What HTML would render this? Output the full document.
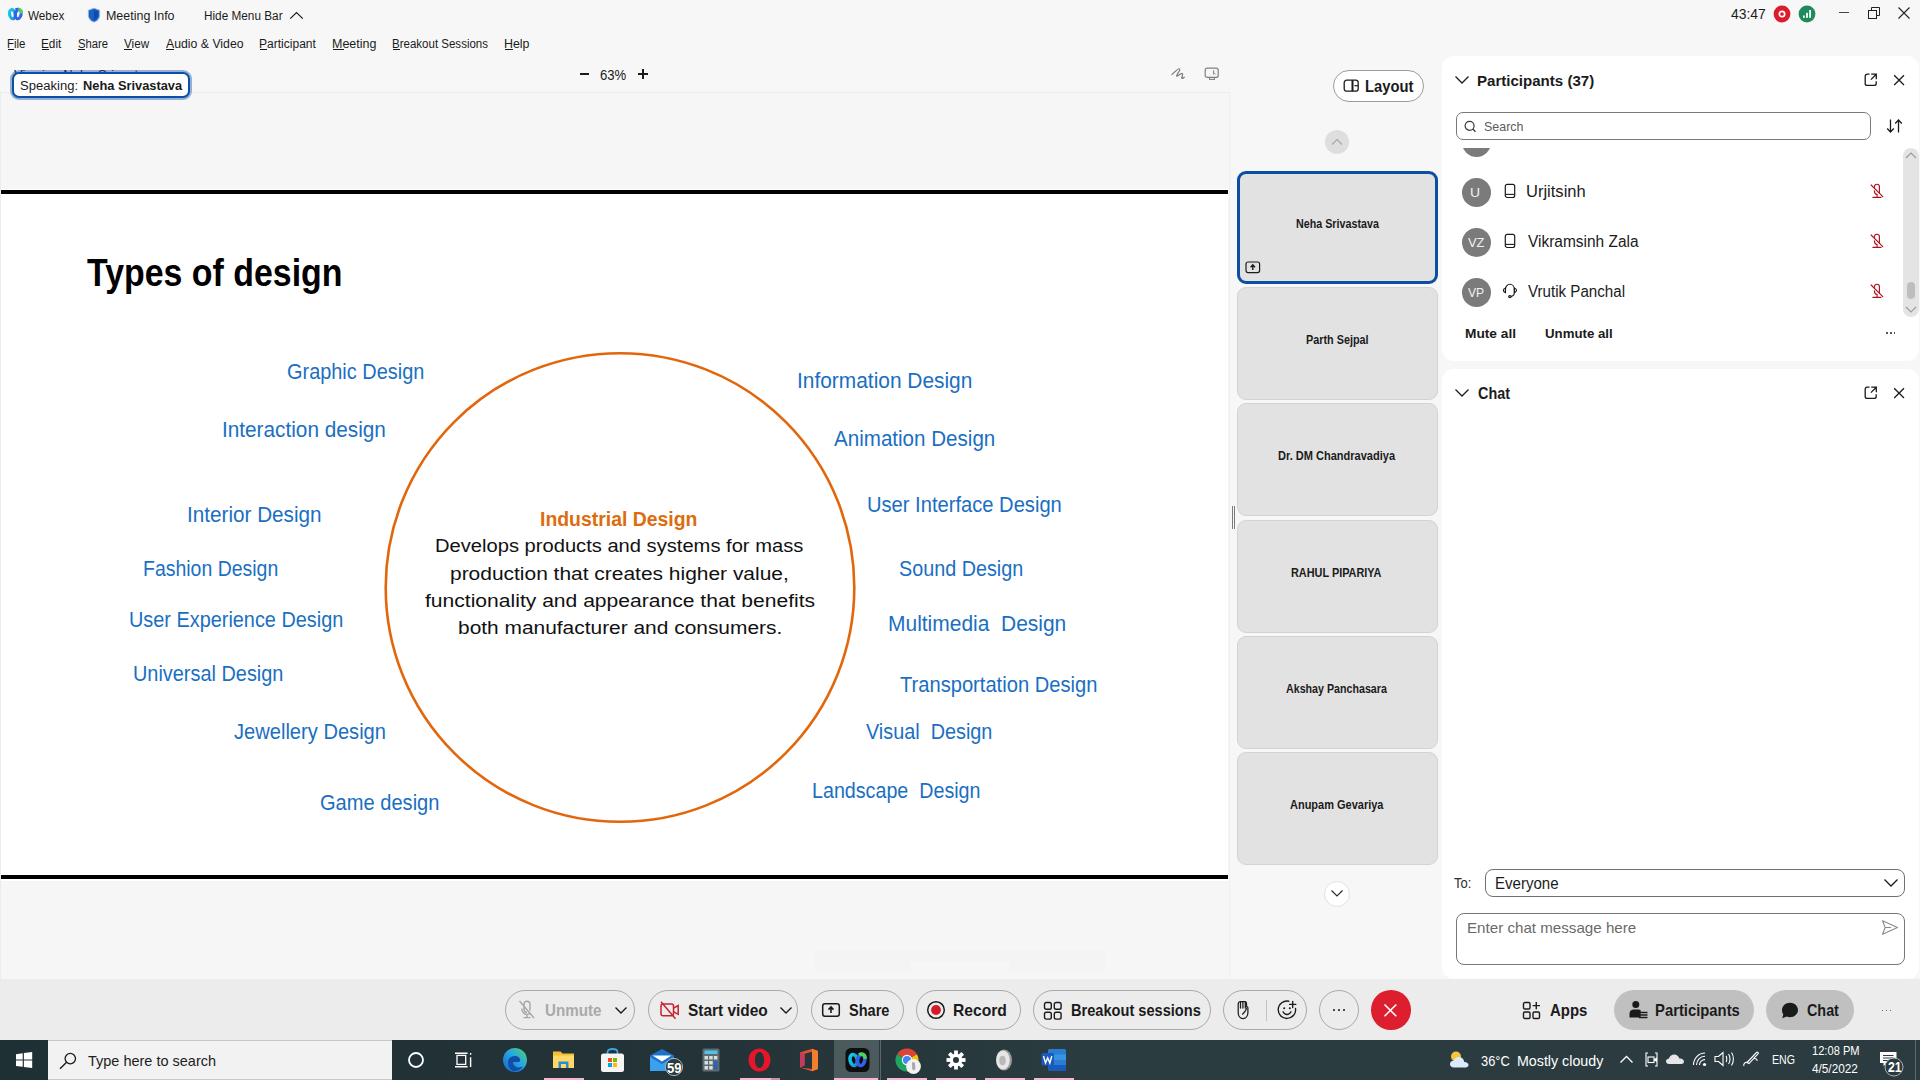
<!DOCTYPE html><html><head><meta charset="utf-8"><title>Webex</title>
<style>
html,body{margin:0;padding:0}
body{width:1920px;height:1080px;position:relative;overflow:hidden;background:#f7f7f7;font-family:"Liberation Sans",sans-serif}
.t{position:absolute;white-space:nowrap;transform-origin:0 0;display:block}
svg{overflow:visible}
</style></head><body>
<div style="position:absolute;left:0px;top:0px;width:1920px;height:979px;background:#f7f7f7"></div>
<div style="position:absolute;left:0px;top:92px;width:1228px;height:887px;background:#f6f6f6;border-top:1px solid #ececec;border-left:1px solid #ececec;border-right:1px solid #efefef"></div>
<div style="position:absolute;left:1px;top:189px;width:1227px;height:692px;background:#fff"></div>
<div style="position:absolute;left:1px;top:190px;width:1227px;height:4px;background:#000"></div>
<div style="position:absolute;left:1px;top:875px;width:1227px;height:4px;background:#000"></div>
<svg style="position:absolute;left:6px;top:7px;" width="19" height="15" viewBox="0 0 19 15"><defs><linearGradient id="wl" x1="0" y1="0" x2="1" y2="1"><stop offset="0" stop-color="#0fd0f5"></stop><stop offset=".6" stop-color="#1aa8d8"></stop><stop offset="1" stop-color="#2f66f2"></stop></linearGradient></defs><ellipse cx="6.4" cy="7.2" rx="2.9" ry="4.6" fill="none" stroke="url(#wl)" stroke-width="3.1" transform="rotate(-14 6.4 7.2)"></ellipse><ellipse cx="12.2" cy="7.2" rx="2.9" ry="4.6" fill="none" stroke="#2f63ee" stroke-width="3.1" transform="rotate(14 12.2 7.2)"></ellipse><path d="M10.6 3.2C11.8 2.3 13.6 2.3 14.8 3.6C15.4 4.3 15.6 5.4 15.5 6.6" fill="none" stroke="#4fd35a" stroke-width="3.1"></path><path d="M9.6 2.9C10.5 2.4 11.4 2.3 12.3 2.4" fill="none" stroke="#2f63ee" stroke-width="3.1"></path></svg>
<span class="t" id="t0" style="left: 28.3px; top: 8.51px; font-size: 13.66px; line-height: 13.66px; font-weight: 400; color: rgb(27, 27, 27); transform: scaleX(0.8579);">Webex</span>
<svg style="position:absolute;left:87px;top:7px;" width="14" height="16" viewBox="0 0 14 16"><path d="M7 1.2L12.6 3.3V8.2C12.6 11.6 10.2 14 7 15.1C3.8 14 1.4 11.6 1.4 8.2V3.3Z" fill="#1c5fc2" stroke="#8fb4ea" stroke-width="1"></path><path d="M7 3.2L10.8 4.6V8.2C10.8 10.6 9.2 12.4 7 13.2Z" fill="#0f4aa8"></path></svg>
<span class="t" id="t1" style="left: 105.79px; top: 8.51px; font-size: 13.66px; line-height: 13.66px; font-weight: 400; color: rgb(27, 27, 27); transform: scaleX(0.912);">Meeting Info</span>
<span class="t" id="t2" style="left: 203.84px; top: 8.51px; font-size: 13.66px; line-height: 13.66px; font-weight: 400; color: rgb(27, 27, 27); transform: scaleX(0.8626);">Hide Menu Bar</span>
<svg style="position:absolute;left:289px;top:11px;" width="15" height="9" viewBox="0 0 15 9"><path d="M1.2 7.6L7.5 1.5L13.8 7.6" fill="none" stroke="#1b1b1b" stroke-width="1.2"></path></svg>
<span class="t" id="t3" style="left: 1731px; top: 5.8px; font-size: 15.12px; line-height: 15.12px; font-weight: 400; color: rgb(27, 27, 27); transform: scaleX(0.9223);">43:47</span>
<svg style="position:absolute;left:1773px;top:5px;" width="18" height="18" viewBox="0 0 18 18"><circle cx="9" cy="9" r="8.4" fill="#dc1c2c"></circle><circle cx="9" cy="9" r="2.7" fill="none" stroke="#fff" stroke-width="1.7"></circle></svg>
<svg style="position:absolute;left:1798px;top:5px;" width="18" height="18" viewBox="0 0 18 18"><circle cx="9" cy="9" r="8.4" fill="#1f8a5b"></circle><rect x="5" y="10.5" width="1.8" height="2.3" fill="#fff"></rect><rect x="8.1" y="7.8" width="1.8" height="5" fill="#fff"></rect><rect x="11.2" y="5" width="1.8" height="7.8" fill="#fff"></rect></svg>
<div style="position:absolute;left:1839px;top:12px;width:10px;height:1px;background:#444"></div>
<svg style="position:absolute;left:1867px;top:6px;" width="14" height="14" viewBox="0 0 14 14"><rect x="1.5" y="4.5" width="8" height="8" fill="none" stroke="#222" stroke-width="1"></rect><path d="M4.5 4.5V1.5H12.5V9.5H9.5" fill="none" stroke="#222" stroke-width="1"></path></svg>
<svg style="position:absolute;left:1897px;top:6px;" width="14" height="14" viewBox="0 0 14 14"><path d="M1.5 1.5L12.5 12.5M12.5 1.5L1.5 12.5" stroke="#222" stroke-width="1.1"></path></svg>
<span class="t" id="t4" style="left: 7.4px; top: 38.01px; font-size: 12.65px; line-height: 12.65px; font-weight: 400; color: rgb(27, 27, 27); transform: scaleX(0.9049);">File</span>
<div style="position:absolute;left:8.3px;top:49px;width:6px;height:1px;background:#1b1b1b"></div>
<span class="t" id="t5" style="left: 41.27px; top: 38.01px; font-size: 12.65px; line-height: 12.65px; font-weight: 400; color: rgb(27, 27, 27); transform: scaleX(0.9309);">Edit</span>
<div style="position:absolute;left:42.2px;top:49px;width:7px;height:1px;background:#1b1b1b"></div>
<span class="t" id="t6" style="left: 78px; top: 38.01px; font-size: 12.65px; line-height: 12.65px; font-weight: 400; color: rgb(27, 27, 27); transform: scaleX(0.8902);">Share</span>
<div style="position:absolute;left:78px;top:49px;width:7px;height:1px;background:#1b1b1b"></div>
<span class="t" id="t7" style="left: 123.8px; top: 38.01px; font-size: 12.65px; line-height: 12.65px; font-weight: 400; color: rgb(27, 27, 27); transform: scaleX(0.9236);">View</span>
<div style="position:absolute;left:123.8px;top:49px;width:8px;height:1px;background:#1b1b1b"></div>
<span class="t" id="t8" style="left: 166.2px; top: 38.01px; font-size: 12.65px; line-height: 12.65px; font-weight: 400; color: rgb(27, 27, 27); transform: scaleX(0.9705);">Audio &amp; Video</span>
<div style="position:absolute;left:166.2px;top:49px;width:8px;height:1px;background:#1b1b1b"></div>
<span class="t" id="t9" style="left: 259.35px; top: 38.01px; font-size: 12.65px; line-height: 12.65px; font-weight: 400; color: rgb(27, 27, 27); transform: scaleX(0.9525);">Participant</span>
<div style="position:absolute;left:260.3px;top:49px;width:7px;height:1px;background:#1b1b1b"></div>
<span class="t" id="t10" style="left: 332.21px; top: 38.01px; font-size: 12.65px; line-height: 12.65px; font-weight: 400; color: rgb(27, 27, 27); transform: scaleX(0.9877);">Meeting</span>
<div style="position:absolute;left:333.2px;top:49px;width:11px;height:1px;background:#1b1b1b"></div>
<span class="t" id="t11" style="left: 392.29px; top: 38.01px; font-size: 12.65px; line-height: 12.65px; font-weight: 400; color: rgb(27, 27, 27); transform: scaleX(0.9109);">Breakout Sessions</span>
<div style="position:absolute;left:393.2px;top:49px;width:7px;height:1px;background:#1b1b1b"></div>
<span class="t" id="t12" style="left: 503.52px; top: 38.01px; font-size: 12.65px; line-height: 12.65px; font-weight: 400; color: rgb(27, 27, 27); transform: scaleX(0.9813);">Help</span>
<div style="position:absolute;left:504.5px;top:49px;width:8px;height:1px;background:#1b1b1b"></div>
<span class="t" id="t13" style="left: 13.5px; top: 67.61px; font-size: 13.66px; line-height: 13.66px; font-weight: 400; color: rgb(27, 27, 27); transform: scaleX(0.9574);">Viewing Neha Srivastava</span>
<div style="position:absolute;left:12px;top:72px;width:174px;height:21.5px;border:2px solid #0b4fa8;border-radius:7px;background:#fff;box-shadow:0 0 0 2px rgba(11,79,168,.42)"></div>
<span class="t" id="t14" style="left: 20.3px; top: 78.7px; font-size: 13.66px; line-height: 13.66px; font-weight: 400; color: rgb(27, 27, 27); transform: scaleX(0.9559);">Speaking:</span>
<span class="t" id="t15" style="left: 83.3px; top: 78.7px; font-size: 13.66px; line-height: 13.66px; font-weight: 700; color: rgb(27, 27, 27); transform: scaleX(0.9393);">Neha Srivastava</span>
<div style="position:absolute;left:579.5px;top:73px;width:9px;height:1.6px;background:#1b1b1b"></div>
<span class="t" id="t16" style="left: 600.2px; top: 66.91px; font-size: 15.26px; line-height: 15.26px; font-weight: 400; color: rgb(27, 27, 27); transform: scaleX(0.8591);">63%</span>
<div style="position:absolute;left:638.4px;top:73.2px;width:9.5px;height:1.6px;background:#1b1b1b"></div>
<div style="position:absolute;left:642.4px;top:69px;width:1.6px;height:10.2px;background:#1b1b1b"></div>
<svg style="position:absolute;left:1170px;top:66px;" width="17" height="15" viewBox="0 0 17 15"><path d="M1.9 8.6C4.5 6 8.5 2 9.7 2.9C10.8 3.7 6 9.5 6.6 10.1C7.2 10.7 11.5 6.6 12.5 7.6C13.3 8.4 11.2 12.2 11.9 12.4C12.4 12.6 13.6 11.7 14.3 11.3" fill="none" stroke="#808080" stroke-width="1.3" stroke-linecap="round" stroke-linejoin="round"></path></svg>
<svg style="position:absolute;left:1204px;top:67px;" width="16" height="14" viewBox="0 0 16 14"><rect x="1.2" y="1.2" width="13" height="9.2" rx="2" fill="none" stroke="#808080" stroke-width="1.2"></rect><rect x="5.5" y="10.6" width="5" height="1.8" fill="none" stroke="#808080" stroke-width="1"></rect><path d="M9.6 3.2V7.2L10.6 6.4L11.6 7.4" fill="none" stroke="#808080" stroke-width="1"></path></svg>
<span class="t" id="t17" style="left: 86.5px; top: 254.31px; font-size: 38.95px; line-height: 38.95px; font-weight: 700; color: rgb(0, 0, 0); transform: scaleX(0.8703);">Types of design</span>
<span class="t" id="t18" style="left: 286.56px; top: 360.51px; font-size: 21.22px; line-height: 21.22px; font-weight: 400; color: rgb(26, 111, 194); transform: scaleX(0.9388);">Graphic Design</span>
<span class="t" id="t19" style="left: 221.72px; top: 418.91px; font-size: 21.22px; line-height: 21.22px; font-weight: 400; color: rgb(26, 111, 194); transform: scaleX(0.9783);">Interaction design</span>
<span class="t" id="t20" style="left: 187.02px; top: 504.11px; font-size: 21.22px; line-height: 21.22px; font-weight: 400; color: rgb(26, 111, 194); transform: scaleX(0.9752);">Interior Design</span>
<span class="t" id="t21" style="left: 143.38px; top: 557.71px; font-size: 21.22px; line-height: 21.22px; font-weight: 400; color: rgb(26, 111, 194); transform: scaleX(0.9174);">Fashion Design</span>
<span class="t" id="t22" style="left: 129.46px; top: 609.01px; font-size: 21.22px; line-height: 21.22px; font-weight: 400; color: rgb(26, 111, 194); transform: scaleX(0.9366);">User Experience Design</span>
<span class="t" id="t23" style="left: 133.26px; top: 662.61px; font-size: 21.22px; line-height: 21.22px; font-weight: 400; color: rgb(26, 111, 194); transform: scaleX(0.9377);">Universal Design</span>
<span class="t" id="t24" style="left: 234.4px; top: 720.76px; font-size: 21.22px; line-height: 21.22px; font-weight: 400; color: rgb(26, 111, 194); transform: scaleX(0.9475);">Jewellery Design</span>
<span class="t" id="t25" style="left: 320.3px; top: 791.76px; font-size: 21.22px; line-height: 21.22px; font-weight: 400; color: rgb(26, 111, 194); transform: scaleX(0.9465);">Game design</span>
<span class="t" id="t26" style="left: 797.22px; top: 370.01px; font-size: 21.22px; line-height: 21.22px; font-weight: 400; color: rgb(26, 111, 194); transform: scaleX(0.9847);">Information Design</span>
<span class="t" id="t27" style="left: 834.4px; top: 427.8px; font-size: 21.22px; line-height: 21.22px; font-weight: 400; color: rgb(26, 111, 194); transform: scaleX(0.9698);">Animation Design</span>
<span class="t" id="t28" style="left: 867.45px; top: 493.61px; font-size: 21.22px; line-height: 21.22px; font-weight: 400; color: rgb(26, 111, 194); transform: scaleX(0.9493);">User Interface Design</span>
<span class="t" id="t29" style="left: 899.2px; top: 557.76px; font-size: 21.22px; line-height: 21.22px; font-weight: 400; color: rgb(26, 111, 194); transform: scaleX(0.9313);">Sound Design</span>
<span class="t" id="t30" style="left: 888.01px; top: 612.61px; font-size: 21.22px; line-height: 21.22px; font-weight: 400; color: rgb(26, 111, 194); transform: scaleX(0.9881);">Multimedia&nbsp; Design</span>
<span class="t" id="t31" style="left: 899.9px; top: 674.01px; font-size: 21.22px; line-height: 21.22px; font-weight: 400; color: rgb(26, 111, 194); transform: scaleX(0.949);">Transportation Design</span>
<span class="t" id="t32" style="left: 866.2px; top: 721.41px; font-size: 21.22px; line-height: 21.22px; font-weight: 400; color: rgb(26, 111, 194); transform: scaleX(0.9342);">Visual&nbsp; Design</span>
<span class="t" id="t33" style="left: 812.27px; top: 779.91px; font-size: 21.22px; line-height: 21.22px; font-weight: 400; color: rgb(26, 111, 194); transform: scaleX(0.9274);">Landscape&nbsp; Design</span>
<svg style="position:absolute;left:380px;top:348px;" width="480" height="480" viewBox="0 0 480 480"><circle cx="240" cy="239.5" r="234.3" fill="none" stroke="#e2660c" stroke-width="2.6"></circle></svg>
<span class="t" id="t34" style="left: 540.02px; top: 509.6px; font-size: 19.77px; line-height: 19.77px; font-weight: 700; color: rgb(220, 108, 12); transform: scaleX(0.9819);">Industrial Design</span>
<span class="t" id="t35" style="left: 435.33px; top: 537.31px; font-size: 18.75px; line-height: 18.75px; font-weight: 400; color: rgb(17, 17, 17); transform: scaleX(1.0742);">Develops products and systems for mass</span>
<span class="t" id="t36" style="left: 450.18px; top: 564.6px; font-size: 18.75px; line-height: 18.75px; font-weight: 400; color: rgb(17, 17, 17); transform: scaleX(1.1169);">production that creates higher value,</span>
<span class="t" id="t37" style="left: 424.6px; top: 591.81px; font-size: 18.75px; line-height: 18.75px; font-weight: 400; color: rgb(17, 17, 17); transform: scaleX(1.1239);">functionality and appearance that benefits</span>
<span class="t" id="t38" style="left: 457.68px; top: 619.1px; font-size: 18.75px; line-height: 18.75px; font-weight: 400; color: rgb(17, 17, 17); transform: scaleX(1.1151);">both manufacturer and consumers.</span>
<div style="position:absolute;left:814px;top:950px;width:292px;height:22px;background:#f4f4f4"></div>
<div style="position:absolute;left:910px;top:962px;width:100px;height:10px;background:#f6f6f6;border-radius:2px"></div>
<div style="position:absolute;left:1333px;top:70px;width:89px;height:30px;border:1px solid #9c9c9c;border-radius:16px;background:#fff"></div>
<svg style="position:absolute;left:1343px;top:79px;" width="17" height="14" viewBox="0 0 17 14"><rect x="1.2" y="1.2" width="14" height="11" rx="2.5" fill="none" stroke="#1b1b1b" stroke-width="1.3"></rect><path d="M9.5 1.2V12.2" stroke="#1b1b1b" stroke-width="2"></path><path d="M11.5 6.7H15" stroke="#1b1b1b" stroke-width="1.2"></path></svg>
<span class="t" id="t39" style="left: 1364.77px; top: 79.01px; font-size: 15.99px; line-height: 15.99px; font-weight: 700; color: rgb(27, 27, 27); transform: scaleX(0.9257);">Layout</span>
<div style="position:absolute;left:1325px;top:130px;width:24px;height:24px;border-radius:50%;background:#dedede"></div>
<svg style="position:absolute;left:1331px;top:138px;" width="12" height="8" viewBox="0 0 12 8"><path d="M1 6.5L6 1.5L11 6.5" fill="none" stroke="#a6a6a6" stroke-width="1.1"></path></svg>
<div style="position:absolute;left:1237px;top:171px;width:195px;height:107px;border:3px solid #0b4ea3;border-radius:9px;background:#e2e2e2"></div>
<span class="t" id="t40" style="left: 1295.5px; top: 217.2px; font-size: 13.23px; line-height: 13.23px; font-weight: 700; color: rgb(27, 27, 27); transform: scaleX(0.8114);">Neha Srivastava</span>
<div style="position:absolute;left:1237px;top:287px;width:199px;height:111px;border:1px solid #d3d3d3;border-radius:9px;background:#e2e2e2"></div>
<span class="t" id="t41" style="left: 1305.6px; top: 333.33px; font-size: 13.23px; line-height: 13.23px; font-weight: 700; color: rgb(27, 27, 27); transform: scaleX(0.8187);">Parth Sejpal</span>
<div style="position:absolute;left:1237px;top:403px;width:199px;height:111px;border:1px solid #d3d3d3;border-radius:9px;background:#e2e2e2"></div>
<span class="t" id="t42" style="left: 1277.8px; top: 449.45px; font-size: 13.23px; line-height: 13.23px; font-weight: 700; color: rgb(27, 27, 27); transform: scaleX(0.8343);">Dr. DM Chandravadiya</span>
<div style="position:absolute;left:1237px;top:520px;width:199px;height:111px;border:1px solid #d3d3d3;border-radius:9px;background:#e2e2e2"></div>
<span class="t" id="t43" style="left: 1291px; top: 565.56px; font-size: 13.23px; line-height: 13.23px; font-weight: 700; color: rgb(27, 27, 27); transform: scaleX(0.8226);">RAHUL PIPARIYA</span>
<div style="position:absolute;left:1237px;top:636px;width:199px;height:111px;border:1px solid #d3d3d3;border-radius:9px;background:#e2e2e2"></div>
<span class="t" id="t44" style="left: 1285.8px; top: 681.69px; font-size: 13.23px; line-height: 13.23px; font-weight: 700; color: rgb(27, 27, 27); transform: scaleX(0.8075);">Akshay Panchasara</span>
<div style="position:absolute;left:1237px;top:752px;width:199px;height:111px;border:1px solid #d3d3d3;border-radius:9px;background:#e2e2e2"></div>
<span class="t" id="t45" style="left: 1290px; top: 797.81px; font-size: 13.23px; line-height: 13.23px; font-weight: 700; color: rgb(27, 27, 27); transform: scaleX(0.8315);">Anupam Gevariya</span>
<svg style="position:absolute;left:1245px;top:261px;" width="16" height="13" viewBox="0 0 16 13"><rect x="1" y="1" width="13.6" height="10.6" rx="2" fill="none" stroke="#1b1b1b" stroke-width="1.2"></rect><path d="M7.8 9V4.2M5.6 6.2L7.8 3.8L10 6.2" fill="none" stroke="#1b1b1b" stroke-width="1.4"></path></svg>
<div style="position:absolute;left:1324px;top:881px;width:24px;height:24px;border-radius:50%;background:#fff;border:1px solid #e2e2e2"></div>
<svg style="position:absolute;left:1330px;top:889px;" width="14" height="9" viewBox="0 0 14 9"><path d="M1.5 1.5L7 7L12.5 1.5" fill="none" stroke="#2a2a2a" stroke-width="1.2"></path></svg>
<div style="position:absolute;left:1231.5px;top:505.5px;width:1px;height:23.5px;background:#7a7a7a"></div>
<div style="position:absolute;left:1234px;top:505.5px;width:1px;height:23.5px;background:#7a7a7a"></div>
<div style="position:absolute;left:1442px;top:56px;width:477px;height:305px;border-radius:12px;background:#fff"></div>
<svg style="position:absolute;left:1454px;top:75px;" width="16" height="11" viewBox="0 0 16 11"><path d="M1.5 1.5L8 8L14.5 1.5" fill="none" stroke="#1b1b1b" stroke-width="1.3"></path></svg>
<span class="t" id="t46" style="left: 1477.41px; top: 72.8px; font-size: 15.26px; line-height: 15.26px; font-weight: 700; color: rgb(27, 27, 27); transform: scaleX(0.9875);">Participants (37)</span>
<svg style="position:absolute;left:1864px;top:73px;" width="14" height="14" viewBox="0 0 14 14"><path d="M5.5 1.2H3.2C2 1.2 1.2 2 1.2 3.2V10.4C1.2 11.6 2 12.4 3.2 12.4H10.2C11.4 12.4 12.2 11.6 12.2 10.4V8.3" fill="none" stroke="#1b1b1b" stroke-width="1.3"></path><path d="M7.2 1.2H12.3V6.2M12.3 1.2L6.9 6.6" fill="none" stroke="#1b1b1b" stroke-width="1.3"></path></svg>
<svg style="position:absolute;left:1893px;top:74px;" width="12.5" height="12.5" viewBox="0 0 12.5 12.5"><path d="M1.2 1.2L11 11M11 1.2L1.2 11" stroke="#1b1b1b" stroke-width="1.3"></path></svg>
<div style="position:absolute;left:1456px;top:112px;width:413px;height:26px;border:1px solid #7a7a7a;border-radius:7px;background:#fff"></div>
<svg style="position:absolute;left:1464px;top:120px;" width="13" height="13" viewBox="0 0 13 13"><circle cx="5.6" cy="5.8" r="4.5" fill="none" stroke="#3a3a3a" stroke-width="1.2"></circle><path d="M8.8 9L11.5 11.7" stroke="#3a3a3a" stroke-width="1.3"></path></svg>
<span class="t" id="t47" style="left: 1484px; top: 120.01px; font-size: 13.37px; line-height: 13.37px; font-weight: 400; color: rgb(92, 92, 92); transform: scaleX(0.9308);">Search</span>
<svg style="position:absolute;left:1886px;top:118px;" width="18" height="16" viewBox="0 0 18 16"><path d="M4.5 1.5V14M1.2 10.5L4.5 14L7.8 10.5" fill="none" stroke="#1b1b1b" stroke-width="1.3"></path><path d="M12.5 14.5V2M9.2 5.5L12.5 2L15.8 5.5" fill="none" stroke="#1b1b1b" stroke-width="1.3"></path></svg>
<div style="position:absolute;left:1442px;top:148px;width:460px;height:170px;overflow:hidden"><div style="position:absolute;left:19.5px;top:-20.5px;width:29px;height:29px;border-radius:50%;background:#7b7b7b"></div></div>
<div style="position:absolute;left:1461.5px;top:177.5px;width:29px;height:29px;border-radius:50%;background:#7b7b7b"></div>
<span class="t" id="t48" style="left: 1470.44px; top: 185.61px; font-size: 13.08px; line-height: 13.08px; font-weight: 400; color: rgb(242, 242, 242); transform: scaleX(1.0625);">U</span>
<svg style="position:absolute;left:1503px;top:183px;" width="14" height="16" viewBox="0 0 14 16"><rect x="2.3" y="1.3" width="9.4" height="13.2" rx="2" fill="none" stroke="#1b1b1b" stroke-width="1.2"></rect><path d="M2.3 11.4H11.7" stroke="#1b1b1b" stroke-width="1.1"></path></svg>
<span class="t" id="t49" style="left: 1526.46px; top: 183.71px; font-size: 15.84px; line-height: 15.84px; font-weight: 400; color: rgb(27, 27, 27); transform: scaleX(1.044);">Urjitsinh</span>
<svg style="position:absolute;left:1868px;top:183px;" width="17" height="17" viewBox="0 0 17 17"><g fill="none" stroke="#b0101c" stroke-width="1.15" stroke-linecap="round"><path d="M6.5 4.2V3.6C6.5 2.2 7.6 1.2 9 1.2C10.4 1.2 11.4 2.2 11.4 3.6V9.6"></path><path d="M6.4 7.7C6.4 9.8 7.6 11.3 9.1 11.6V14.4M4.9 14.4H13"></path><path d="M3.1 2L14.8 13.6"></path></g></svg>
<div style="position:absolute;left:1461.5px;top:227.5px;width:29px;height:29px;border-radius:50%;background:#7b7b7b"></div>
<span class="t" id="t50" style="left: 1467.8px; top: 235.61px; font-size: 13.08px; line-height: 13.08px; font-weight: 400; color: rgb(242, 242, 242); transform: scaleX(0.9867);">VZ</span>
<svg style="position:absolute;left:1503px;top:233px;" width="14" height="16" viewBox="0 0 14 16"><rect x="2.3" y="1.3" width="9.4" height="13.2" rx="2" fill="none" stroke="#1b1b1b" stroke-width="1.2"></rect><path d="M2.3 11.4H11.7" stroke="#1b1b1b" stroke-width="1.1"></path></svg>
<span class="t" id="t51" style="left: 1527.5px; top: 233.71px; font-size: 15.84px; line-height: 15.84px; font-weight: 400; color: rgb(27, 27, 27); transform: scaleX(0.9772);">Vikramsinh Zala</span>
<svg style="position:absolute;left:1868px;top:233px;" width="17" height="17" viewBox="0 0 17 17"><g fill="none" stroke="#b0101c" stroke-width="1.15" stroke-linecap="round"><path d="M6.5 4.2V3.6C6.5 2.2 7.6 1.2 9 1.2C10.4 1.2 11.4 2.2 11.4 3.6V9.6"></path><path d="M6.4 7.7C6.4 9.8 7.6 11.3 9.1 11.6V14.4M4.9 14.4H13"></path><path d="M3.1 2L14.8 13.6"></path></g></svg>
<div style="position:absolute;left:1461.5px;top:277.5px;width:29px;height:29px;border-radius:50%;background:#7b7b7b"></div>
<span class="t" id="t52" style="left: 1468.2px; top: 285.61px; font-size: 13.08px; line-height: 13.08px; font-weight: 400; color: rgb(242, 242, 242); transform: scaleX(0.9254);">VP</span>
<svg style="position:absolute;left:1502px;top:283px;" width="16" height="16" viewBox="0 0 16 16"><g fill="none" stroke="#1b1b1b" stroke-width="1.1"><path d="M3.4 9.5V6.5C3.4 3.5 5.4 1.3 7.9 1.3C10.4 1.3 12.4 3.5 12.4 6.5V9.5C12.4 11.8 10.8 13.2 8.9 13.5"></path><path d="M3.5 4.9C2 5.4 1.3 6.3 1.3 7.3C1.3 8.3 2 9.2 3.5 9.7Z"></path><path d="M12.3 4.9C13.8 5.4 14.5 6.3 14.5 7.3C14.5 8.3 13.8 9.2 12.3 9.7Z"></path><ellipse cx="7.9" cy="13.6" rx="1.3" ry="1"></ellipse></g></svg>
<span class="t" id="t53" style="left: 1527.5px; top: 283.71px; font-size: 15.84px; line-height: 15.84px; font-weight: 400; color: rgb(27, 27, 27); transform: scaleX(0.9559);">Vrutik Panchal</span>
<svg style="position:absolute;left:1868px;top:283px;" width="17" height="17" viewBox="0 0 17 17"><g fill="none" stroke="#b0101c" stroke-width="1.15" stroke-linecap="round"><path d="M6.5 4.2V3.6C6.5 2.2 7.6 1.2 9 1.2C10.4 1.2 11.4 2.2 11.4 3.6V9.6"></path><path d="M6.4 7.7C6.4 9.8 7.6 11.3 9.1 11.6V14.4M4.9 14.4H13"></path><path d="M3.1 2L14.8 13.6"></path></g></svg>
<div style="position:absolute;left:1903px;top:148px;width:15.5px;height:168.5px;border-radius:8px;background:#e4e4e4"></div>
<div style="position:absolute;left:1907px;top:282px;width:8px;height:17px;border-radius:4px;background:#bdbdbd"></div>
<svg style="position:absolute;left:1904px;top:151px;" width="14" height="9" viewBox="0 0 14 9"><path d="M2 7L7 2L12 7" fill="none" stroke="#9a9a9a" stroke-width="1.1"></path></svg>
<svg style="position:absolute;left:1904px;top:305px;" width="14" height="9" viewBox="0 0 14 9"><path d="M2 2L7 7L12 2" fill="none" stroke="#9a9a9a" stroke-width="1.1"></path></svg>
<span class="t" id="t54" style="left: 1464.7px; top: 326.51px; font-size: 13.37px; line-height: 13.37px; font-weight: 700; color: rgb(27, 27, 27); transform: scaleX(1.0261);">Mute all</span>
<span class="t" id="t55" style="left: 1545px; top: 326.51px; font-size: 13.37px; line-height: 13.37px; font-weight: 700; color: rgb(27, 27, 27); transform: scaleX(0.9914);">Unmute all</span>
<div style="position:absolute;left:1886.3px;top:332.2px;width:1.8px;height:1.8px;background:#555"></div>
<div style="position:absolute;left:1890.0px;top:332.2px;width:1.8px;height:1.8px;background:#555"></div>
<div style="position:absolute;left:1893.7px;top:332.2px;width:1.8px;height:1.8px;background:#555"></div>
<div style="position:absolute;left:1442px;top:369px;width:477px;height:610px;border-radius:12px 12px 12px 12px;background:#fff"></div>
<svg style="position:absolute;left:1454px;top:388px;" width="16" height="11" viewBox="0 0 16 11"><path d="M1.5 1.5L8 8L14.5 1.5" fill="none" stroke="#1b1b1b" stroke-width="1.3"></path></svg>
<span class="t" id="t56" style="left: 1478.4px; top: 385.76px; font-size: 15.84px; line-height: 15.84px; font-weight: 700; color: rgb(27, 27, 27); transform: scaleX(0.908);">Chat</span>
<svg style="position:absolute;left:1864px;top:386px;" width="14" height="14" viewBox="0 0 14 14"><path d="M5.5 1.2H3.2C2 1.2 1.2 2 1.2 3.2V10.4C1.2 11.6 2 12.4 3.2 12.4H10.2C11.4 12.4 12.2 11.6 12.2 10.4V8.3" fill="none" stroke="#1b1b1b" stroke-width="1.3"></path><path d="M7.2 1.2H12.3V6.2M12.3 1.2L6.9 6.6" fill="none" stroke="#1b1b1b" stroke-width="1.3"></path></svg>
<svg style="position:absolute;left:1893px;top:387px;" width="12.5" height="12.5" viewBox="0 0 12.5 12.5"><path d="M1.2 1.2L11 11M11 1.2L1.2 11" stroke="#1b1b1b" stroke-width="1.3"></path></svg>
<span class="t" id="t57" style="left: 1454.25px; top: 875.8px; font-size: 14.1px; line-height: 14.1px; font-weight: 400; color: rgb(46, 46, 46); transform: scaleX(0.9198);">To:</span>
<div style="position:absolute;left:1485px;top:869px;width:418px;height:26px;border:1px solid #707070;border-radius:8px;background:#fff"></div>
<span class="t" id="t58" style="left: 1494.74px; top: 875.9px; font-size: 15.7px; line-height: 15.7px; font-weight: 400; color: rgb(27, 27, 27); transform: scaleX(0.9596);">Everyone</span>
<svg style="position:absolute;left:1883px;top:878px;" width="16" height="10" viewBox="0 0 16 10"><path d="M1.5 1.5L8 8L14.5 1.5" fill="none" stroke="#1b1b1b" stroke-width="1.3"></path></svg>
<div style="position:absolute;left:1456px;top:913px;width:447px;height:50px;border:1px solid #777;border-radius:8px;background:#fff"></div>
<span class="t" id="t59" style="left: 1466.82px; top: 919.8px; font-size: 15.41px; line-height: 15.41px; font-weight: 400; color: rgb(106, 106, 106); transform: scaleX(0.9832);">Enter chat message here</span>
<svg style="position:absolute;left:1881px;top:919px;" width="18" height="17" viewBox="0 0 18 17"><path d="M1.5 1.8L16.5 8.5L1.5 15.2L4.2 8.5Z" fill="none" stroke="#8a8a8a" stroke-width="1.1" stroke-linejoin="round"></path><path d="M4.2 8.5H10" stroke="#8a8a8a" stroke-width="1.1"></path></svg>
<div style="position:absolute;left:0px;top:979px;width:1920px;height:61px;background:#ececec"></div>
<div style="position:absolute;left:505px;top:990px;width:127.70000000000005px;height:37.5px;border:1px solid #a9a9a9;border-radius:20px;background:transparent;box-sizing:content-box"></div>
<svg style="position:absolute;left:517px;top:999px;" width="20" height="21" viewBox="0 0 20 21"><path d="M7 7V5.5C7 3.6 8.3 2.2 10 2.2C11.7 2.2 13 3.6 13 5.5V10C13 10.6 12.9 11.1 12.6 11.6" fill="none" stroke="#a6a6a6" stroke-width="1.4"></path><path d="M7 8V10.2C7 12 8.3 13.2 10 13.2M4.8 9.6C4.8 13 7.2 15.4 10 15.4C11.1 15.4 12.2 15 13 14.4M10 15.4V18.6M6.5 18.6H13.5M2.5 2L17 19" fill="none" stroke="#a6a6a6" stroke-width="1.4"></path></svg>
<span class="t" id="t60" style="left: 545.3px; top: 1002.81px; font-size: 15.7px; line-height: 15.7px; font-weight: 700; color: rgb(169, 169, 169); transform: scaleX(0.9665);">Unmute</span>
<svg style="position:absolute;left:614px;top:1006px;" width="14" height="9" viewBox="0 0 14 9"><path d="M1.5 1.5L7 7L12.5 1.5" fill="none" stroke="#1b1b1b" stroke-width="1.4"></path></svg>
<div style="position:absolute;left:647.5px;top:990px;width:148.79999999999995px;height:37.5px;border:1px solid #a9a9a9;border-radius:20px;background:transparent;box-sizing:content-box"></div>
<svg style="position:absolute;left:659px;top:1000px;" width="22" height="20" viewBox="0 0 22 20"><rect x="2" y="4" width="12.5" height="11.8" rx="2" fill="none" stroke="#c8202f" stroke-width="1.5"></rect><path d="M14.5 8.2L19.2 5.5V14.3L14.5 11.6" fill="none" stroke="#c8202f" stroke-width="1.5"></path><path d="M2 1.8L16.5 18.8" stroke="#c8202f" stroke-width="1.5"></path></svg>
<span class="t" id="t61" style="left: 688.3px; top: 1002.81px; font-size: 15.7px; line-height: 15.7px; font-weight: 700; color: rgb(27, 27, 27); transform: scaleX(0.984);">Start video</span>
<svg style="position:absolute;left:779px;top:1006px;" width="14" height="9" viewBox="0 0 14 9"><path d="M1.5 1.5L7 7L12.5 1.5" fill="none" stroke="#1b1b1b" stroke-width="1.4"></path></svg>
<div style="position:absolute;left:811.3px;top:990px;width:90.40000000000009px;height:37.5px;border:1px solid #a9a9a9;border-radius:20px;background:transparent;box-sizing:content-box"></div>
<svg style="position:absolute;left:821px;top:1002px;" width="20" height="16" viewBox="0 0 20 16"><rect x="1.7" y="1.7" width="16.6" height="12.6" rx="2.2" fill="none" stroke="#1b1b1b" stroke-width="1.5"></rect><path d="M10 11V5.2M7.5 7.6L10 5L12.5 7.6" fill="none" stroke="#1b1b1b" stroke-width="1.6"></path></svg>
<span class="t" id="t62" style="left: 849px; top: 1002.81px; font-size: 15.7px; line-height: 15.7px; font-weight: 700; color: rgb(27, 27, 27); transform: scaleX(0.9276);">Share</span>
<div style="position:absolute;left:916.3px;top:990px;width:102.5px;height:37.5px;border:1px solid #a9a9a9;border-radius:20px;background:transparent;box-sizing:content-box"></div>
<svg style="position:absolute;left:926px;top:1000px;" width="20" height="20" viewBox="0 0 20 20"><circle cx="10" cy="10" r="8.3" fill="none" stroke="#1b1b1b" stroke-width="1.5"></circle><circle cx="10" cy="10" r="4.9" fill="#d41a2b"></circle></svg>
<span class="t" id="t63" style="left: 953px; top: 1002.81px; font-size: 15.7px; line-height: 15.7px; font-weight: 700; color: rgb(27, 27, 27); transform: scaleX(0.9968);">Record</span>
<div style="position:absolute;left:1033.3px;top:990px;width:175.5px;height:37.5px;border:1px solid #a9a9a9;border-radius:20px;background:transparent;box-sizing:content-box"></div>
<svg style="position:absolute;left:1043px;top:1001px;" width="20" height="20" viewBox="0 0 20 20"><rect x="1.5" y="1.5" width="6.8" height="6.8" rx="1.8" fill="none" stroke="#1b1b1b" stroke-width="1.4"></rect><rect x="11.3" y="1.5" width="6.8" height="6.8" rx="1.8" fill="none" stroke="#1b1b1b" stroke-width="1.4"></rect><rect x="1.5" y="11.3" width="6.8" height="6.8" rx="1.8" fill="none" stroke="#1b1b1b" stroke-width="1.4"></rect><rect x="11.3" y="11.3" width="6.8" height="6.8" rx="1.8" fill="none" stroke="#1b1b1b" stroke-width="1.4"></rect></svg>
<span class="t" id="t64" style="left: 1070.77px; top: 1002.81px; font-size: 15.7px; line-height: 15.7px; font-weight: 700; color: rgb(27, 27, 27); transform: scaleX(0.9303);">Breakout sessions</span>
<div style="position:absolute;left:1223.3px;top:990px;width:81.40000000000009px;height:37.5px;border:1px solid #a9a9a9;border-radius:20px;background:transparent;box-sizing:content-box"></div>
<svg style="position:absolute;left:1235px;top:1000px;" width="16" height="20" viewBox="0 0 16 20"><g fill="none" stroke="#1b1b1b" stroke-width="1.25" stroke-linecap="round"><path d="M3.2 12.5V4.2C3.2 2.6 4.2 1.6 5.5 1.5H10C11.2 1.6 11.5 2.8 11.5 4V7.4C11.6 6.7 12.9 6.7 12.9 7.9V12.8C12.9 16 10.8 18.5 8 18.5C5.2 18.5 3.2 16 3.2 12.5Z"></path><path d="M5.5 2V8.1M7.9 1.5V8.1M10.3 2V8.1"></path><path d="M11.4 8.6C11 10.5 9.6 12 7.6 14.2"></path></g></svg>
<div style="position:absolute;left:1265.5px;top:999.5px;width:1px;height:21px;background:#c2c2c2"></div>
<svg style="position:absolute;left:1277px;top:1000px;" width="21" height="20" viewBox="0 0 21 20"><g fill="none" stroke="#1b1b1b" stroke-width="1.35" stroke-linecap="round"><path d="M11.75 1.25A8.7 8.7 0 1 0 18.5 8.4"></path><path d="M6 11.8C7 13.8 8.5 14.5 10 14.5C11.5 14.5 13 13.8 14 11.8"></path><path d="M15.7 1.3V7.5M12.6 4.4H18.8"></path></g><circle cx="7.2" cy="8.3" r="1" fill="#1b1b1b"></circle><circle cx="12.8" cy="8.3" r="1" fill="#1b1b1b"></circle></svg>
<div style="position:absolute;left:1319px;top:990px;width:37.799999999999955px;height:37.5px;border:1px solid #a9a9a9;border-radius:20px;background:transparent;box-sizing:content-box"></div>
<div style="position:absolute;left:1333px;top:1009.3px;width:1.7px;height:1.7px;background:#333;border-radius:50%"></div>
<div style="position:absolute;left:1338px;top:1009.3px;width:1.7px;height:1.7px;background:#333;border-radius:50%"></div>
<div style="position:absolute;left:1343px;top:1009.3px;width:1.7px;height:1.7px;background:#333;border-radius:50%"></div>
<div style="position:absolute;left:1371px;top:990.2px;width:39.5px;height:39.5px;border-radius:50%;background:#dc1e2e"></div>
<svg style="position:absolute;left:1383px;top:1003px;" width="15" height="15" viewBox="0 0 15 15"><path d="M1.5 1.5L13.3 13.3M13.3 1.5L1.5 13.3" stroke="#fff" stroke-width="1.6"></path></svg>
<svg style="position:absolute;left:1522px;top:1001px;" width="20" height="19" viewBox="0 0 20 19"><rect x="1.5" y="1.5" width="6.5" height="6.5" rx="1.3" fill="none" stroke="#1b1b1b" stroke-width="1.4"></rect><rect x="1.5" y="11" width="6.5" height="6.5" rx="1.3" fill="none" stroke="#1b1b1b" stroke-width="1.4"></rect><rect x="11" y="11" width="6.5" height="6.5" rx="1.3" fill="none" stroke="#1b1b1b" stroke-width="1.4"></rect><path d="M14.25 1V8.2M10.6 4.6H17.9" stroke="#1b1b1b" stroke-width="1.4"></path></svg>
<span class="t" id="t65" style="left: 1550px; top: 1003.01px; font-size: 15.99px; line-height: 15.99px; font-weight: 700; color: rgb(27, 27, 27); transform: scaleX(0.9358);">Apps</span>
<div style="position:absolute;left:1614px;top:990px;width:140px;height:39.5px;border-radius:20px;background:#c0c0c0"></div>
<svg style="position:absolute;left:1628px;top:1000px;" width="21" height="20" viewBox="0 0 21 20"><circle cx="7.8" cy="4.5" r="3.5" fill="#1b1b1b"></circle><path d="M1.5 17.5V13.5C1.5 11 3.5 9.5 6 9.5H10.5C11.3 9.5 12 9.7 12.6 10V17.5Z" fill="#1b1b1b"></path><path d="M11 12.5H19.5M11 15H19.5M11 17.5H19.5" stroke="#1b1b1b" stroke-width="1.3"></path></svg>
<span class="t" id="t66" style="left: 1654.57px; top: 1003.01px; font-size: 15.99px; line-height: 15.99px; font-weight: 700; color: rgb(27, 27, 27); transform: scaleX(0.9271);">Participants</span>
<div style="position:absolute;left:1766px;top:990px;width:88px;height:39.5px;border-radius:20px;background:#c0c0c0"></div>
<svg style="position:absolute;left:1780px;top:1001px;" width="20" height="19" viewBox="0 0 20 19"><path d="M10 1.8C14.5 1.8 18 5 18 9C18 13 14.5 16.2 10 16.2C8.8 16.2 7.7 16 6.7 15.6L2.2 17.3L3.3 13.4C2.5 12.1 2 10.6 2 9C2 5 5.5 1.8 10 1.8Z" fill="#1b1b1b"></path></svg>
<span class="t" id="t67" style="left: 1807px; top: 1003.01px; font-size: 15.99px; line-height: 15.99px; font-weight: 700; color: rgb(27, 27, 27); transform: scaleX(0.8979);">Chat</span>
<div style="position:absolute;left:1881.5px;top:1009.5px;width:1.5px;height:1.5px;background:#444;border-radius:50%"></div>
<div style="position:absolute;left:1885.5px;top:1009.5px;width:1.5px;height:1.5px;background:#444;border-radius:50%"></div>
<div style="position:absolute;left:1889.5px;top:1009.5px;width:1.5px;height:1.5px;background:#444;border-radius:50%"></div>
<div style="position:absolute;left:0px;top:1040px;width:1920px;height:40px;background:linear-gradient(to right,#1f3035 0px,#233337 720px,#2b3c41 1100px,#2b3b40 1920px)"></div>
<svg style="position:absolute;left:15px;top:1051px;" width="19" height="18" viewBox="0 0 19 18"><path d="M1 3.2L7.7 2.3V8.4H1Z M8.9 2.1L17.2 1V8.4H8.9Z M1 9.6H7.7V15.8L1 14.9Z M8.9 9.6H17.2V17L8.9 15.9Z" fill="#fff"></path></svg>
<div style="position:absolute;left:48px;top:1040px;width:344px;height:40px;background:#f2f2f2;border-top:1px solid #c6c6c6;border-bottom:1px solid #c9c9c9;box-sizing:border-box"></div>
<svg style="position:absolute;left:58px;top:1051px;" width="20" height="20" viewBox="0 0 20 20"><circle cx="12.3" cy="7.6" r="5.2" fill="none" stroke="#1b1b1b" stroke-width="1.3"></circle><path d="M8.6 11.3L2 17.8" stroke="#1b1b1b" stroke-width="1.4"></path></svg>
<span class="t" id="t68" style="left: 88.3px; top: 1053.5px; font-size: 14.97px; line-height: 14.97px; font-weight: 400; color: rgb(30, 30, 30); transform: scaleX(0.9676);">Type here to search</span>
<svg style="position:absolute;left:406px;top:1050px;" width="20" height="20" viewBox="0 0 20 20"><circle cx="10" cy="10" r="7" fill="none" stroke="#fff" stroke-width="1.8"></circle></svg>
<svg style="position:absolute;left:454px;top:1051px;" width="19" height="18" viewBox="0 0 19 18"><rect x="3" y="4.4" width="8.7" height="9" fill="none" stroke="#fff" stroke-width="1.3"></rect><path d="M1 2.2H13.6M1 15.8H13.6M16.6 2V3.8M16.6 6.2V16" stroke="#fff" stroke-width="1.4"></path></svg>
<svg style="position:absolute;left:502px;top:1047px;" width="26" height="26" viewBox="0 0 26 26"><defs><linearGradient id="eg" x1="1" y1="0" x2="0" y2="1"><stop offset="0" stop-color="#4fd66a"></stop><stop offset=".45" stop-color="#29a6e2"></stop><stop offset="1" stop-color="#1565c9"></stop></linearGradient></defs><circle cx="13" cy="13" r="12" fill="url(#eg)"></circle><path d="M6 15.5C6 11.8 9 9 12.6 9C16 9 18.2 11 18.2 13.2C18.2 14.4 17.3 15 16 15H11C11 18 13.6 20.5 17 20.5C18.6 20.5 20 20 21 19.3C19 22.8 15.4 24.5 12.2 24.2C8.5 23.8 6 20 6 15.5Z" fill="#0f4fa8"></path></svg>
<svg style="position:absolute;left:552px;top:1050px;" width="23" height="19" viewBox="0 0 23 19"><path d="M1 1.5H8.5L10.5 3.5H22V18H1Z" fill="#f1c232"></path><rect x="1" y="5.5" width="21" height="12.5" fill="#ffd866"></rect><path d="M6.5 18V11.5H16.5V18H14V14H9V18Z" fill="#2a8ad8"></path></svg>
<svg style="position:absolute;left:600px;top:1048px;" width="25" height="25" viewBox="0 0 25 25"><path d="M7.5 6V4C7.5 2 9.5 1 12.5 1C15.5 1 17.5 2 17.5 4V6" fill="none" stroke="#35a8e8" stroke-width="1.8"></path><rect x="1" y="5.5" width="23" height="18.5" rx="2.5" fill="#f4f4f4"></rect><rect x="8" y="10" width="4" height="4" fill="#f25022"></rect><rect x="13" y="10" width="4" height="4" fill="#7fba00"></rect><rect x="8" y="15" width="4" height="4" fill="#00a4ef"></rect><rect x="13" y="15" width="4" height="4" fill="#ffb900"></rect></svg>
<svg style="position:absolute;left:649px;top:1048px;" width="35" height="28" viewBox="0 0 35 28"><path d="M1 7.5L13 1L25 7.5V23H1Z" fill="#1a73c9"></path><path d="M1 9L13 16L25 9V23H1Z" fill="#3aa0f0"></path><path d="M3.5 7.5H22.5L13 13.5Z" fill="#fff"></path><circle cx="25" cy="19" r="8.6" fill="#2b3a3e" stroke="#aab4b6" stroke-width="1"></circle></svg>
<span class="t" id="t69" style="left: 667px; top: 1060.5px; font-size: 14.54px; line-height: 14.54px; font-weight: 700; color: rgb(255, 255, 255); transform: scaleX(0.9017);">59</span>
<svg style="position:absolute;left:702px;top:1048px;" width="18" height="24" viewBox="0 0 18 24"><rect x="0.5" y="0.5" width="17" height="23" rx="1.5" fill="#5f6b70"></rect><rect x="2.5" y="2.5" width="13" height="3.5" fill="#4fc3e8"></rect><g fill="#d8dee0"><rect x="2.5" y="8" width="3.5" height="3.5"></rect><rect x="7.2" y="8" width="3.5" height="3.5"></rect><rect x="11.9" y="8" width="3.5" height="3.5"></rect><rect x="2.5" y="13" width="3.5" height="3.5"></rect><rect x="7.2" y="13" width="3.5" height="3.5"></rect><rect x="2.5" y="18" width="3.5" height="3.5"></rect><rect x="7.2" y="18" width="3.5" height="3.5"></rect></g><rect x="11.9" y="13" width="3.5" height="8.5" fill="#2a62b8"></rect></svg>
<svg style="position:absolute;left:748px;top:1048px;" width="23" height="24" viewBox="0 0 23 24"><ellipse cx="11.5" cy="12" rx="11" ry="11.6" fill="#e5152b"></ellipse><ellipse cx="11.5" cy="12" rx="4.6" ry="8" fill="#243438"></ellipse></svg>
<svg style="position:absolute;left:799px;top:1048px;" width="20" height="24" viewBox="0 0 20 24"><path d="M1 4.5L13 0.8L19 3V21L13 23.2L1 19.5L13 21V3.8L5.5 5.8V17.5L1 19.5Z" fill="#e6512a"></path><path d="M13 0.8L19 3V21L13 23.2Z" fill="#f27f2f"></path><path d="M1 4.5L5.5 5.8V17.5L1 19.5Z" fill="#c63a5e"></path></svg>
<div style="position:absolute;left:834px;top:1040px;width:45px;height:40px;background:#4b5a5d"></div>
<div style="position:absolute;left:879.5px;top:1040px;width:1px;height:40px;background:#5a6669"></div>
<svg style="position:absolute;left:845px;top:1048px;" width="25" height="25" viewBox="0 0 25 25"><defs><linearGradient id="wl2" x1="0" y1="0" x2="1" y2="1"><stop offset="0" stop-color="#0fd0f5"></stop><stop offset=".6" stop-color="#1aa8d8"></stop><stop offset="1" stop-color="#2f66f2"></stop></linearGradient></defs><rect x="0.5" y="0" width="24" height="24" rx="5.5" fill="#0e0e0e"></rect><ellipse cx="8.7" cy="12" rx="3.6" ry="5.6" fill="none" stroke="url(#wl2)" stroke-width="3.6" transform="rotate(-12 8.7 12)"></ellipse><ellipse cx="16.2" cy="12" rx="3.6" ry="5.6" fill="none" stroke="#2f63ee" stroke-width="3.6" transform="rotate(12 16.2 12)"></ellipse><path d="M14.2 6.8C15.6 5.6 17.8 5.6 19.2 7.2C19.9 8 20.2 9.4 20.1 10.8" fill="none" stroke="#4fd35a" stroke-width="3.6"></path></svg>
<svg style="position:absolute;left:895px;top:1048px;" width="28" height="28" viewBox="0 0 28 28"><path d="M12 12L2.04 6.25A11.5 11.5 0 0 1 21.96 6.25Z" fill="#db4437"></path><path d="M12 12L21.96 6.25A11.5 11.5 0 0 1 12 23.5Z" fill="#f4c20d"></path><path d="M12 12L12 23.5A11.5 11.5 0 0 1 2.04 6.25Z" fill="#1fa463"></path><circle cx="12" cy="12" r="5.2" fill="#fff"></circle><circle cx="12" cy="12" r="4.1" fill="#4285f4"></circle><circle cx="18.5" cy="18.5" r="7.4" fill="#f2f2f2"></circle><path d="M17 14.5C18.2 13.8 19.8 14.2 20 15.6L20.4 21L18.8 22.6L17.2 21.2Z" fill="#a8a8a8"></path></svg>
<svg style="position:absolute;left:946px;top:1050px;" width="20" height="20" viewBox="0 0 20 20"><g transform="translate(10 10)"><g fill="#fff"><rect x="-1.9" y="-9.5" width="3.8" height="4.5"></rect><rect x="-1.9" y="-9.5" width="3.8" height="4.5" transform="rotate(45)"></rect><rect x="-1.9" y="-9.5" width="3.8" height="4.5" transform="rotate(90)"></rect><rect x="-1.9" y="-9.5" width="3.8" height="4.5" transform="rotate(135)"></rect><rect x="-1.9" y="-9.5" width="3.8" height="4.5" transform="rotate(180)"></rect><rect x="-1.9" y="-9.5" width="3.8" height="4.5" transform="rotate(225)"></rect><rect x="-1.9" y="-9.5" width="3.8" height="4.5" transform="rotate(270)"></rect><rect x="-1.9" y="-9.5" width="3.8" height="4.5" transform="rotate(315)"></rect></g><circle r="6.3" fill="#fff"></circle><circle r="3" fill="#263639"></circle></g></svg>
<svg style="position:absolute;left:993px;top:1048px;" width="22" height="24" viewBox="0 0 22 24"><ellipse cx="11" cy="12" rx="8" ry="10.5" fill="#9a9a9a"></ellipse><ellipse cx="10" cy="12" rx="6.8" ry="9.5" fill="#e6e6e6"></ellipse><ellipse cx="9.5" cy="12.5" rx="3.2" ry="4.8" fill="#b8b8b8"></ellipse></svg>
<svg style="position:absolute;left:1041px;top:1048px;" width="26" height="23" viewBox="0 0 26 23"><rect x="7" y="1" width="18" height="21.5" rx="1.5" fill="#2b7cd3"></rect><rect x="7" y="6.5" width="18" height="5.5" fill="#41a5ee" opacity=".6"></rect><rect x="7" y="17" width="18" height="5.5" fill="#185abd"></rect><rect x="0.5" y="5" width="12.5" height="12.5" rx="1.5" fill="#185abd"></rect><path d="M2.5 8L4.5 15L6.7 9.8L8.8 15L10.8 8" fill="none" stroke="#fff" stroke-width="1.4"></path></svg>
<div style="position:absolute;left:544px;top:1078px;width:40px;height:2px;background:#f4b6d2"></div>
<div style="position:absolute;left:740px;top:1078px;width:31px;height:2px;background:#f4b6d2"></div>
<div style="position:absolute;left:834px;top:1078px;width:44px;height:2px;background:#f4b6d2"></div>
<div style="position:absolute;left:887px;top:1078px;width:40px;height:2px;background:#f4b6d2"></div>
<div style="position:absolute;left:936px;top:1078px;width:40px;height:2px;background:#f4b6d2"></div>
<div style="position:absolute;left:985px;top:1078px;width:40px;height:2px;background:#f4b6d2"></div>
<div style="position:absolute;left:1034px;top:1078px;width:40px;height:2px;background:#f4b6d2"></div>
<div style="position:absolute;left:771px;top:1078px;width:9px;height:2px;background:#c98eaa"></div>
<svg style="position:absolute;left:1448px;top:1050px;" width="24" height="19" viewBox="0 0 24 19"><circle cx="8" cy="6.5" r="5" fill="#f7c23e"></circle><path d="M6 17.5C3.5 17.5 2 16 2 14C2 12 3.6 10.6 5.6 10.8C6.3 8.4 8.4 7 10.8 7C13.8 7 16 9.2 16.2 12C18.5 11.8 20.5 13.3 20.5 15C20.5 16.6 19.2 17.5 17.5 17.5Z" fill="#d9ecfb"></path></svg>
<span class="t" id="t70" style="left: 1480.5px; top: 1054.25px; font-size: 14.54px; line-height: 14.54px; font-weight: 400; color: rgb(255, 255, 255); transform: scaleX(0.8835);">36°C</span>
<span class="t" id="t71" style="left: 1517.27px; top: 1054.25px; font-size: 14.54px; line-height: 14.54px; font-weight: 400; color: rgb(255, 255, 255); transform: scaleX(0.98);">Mostly cloudy</span>
<svg style="position:absolute;left:1619px;top:1055px;" width="15" height="9" viewBox="0 0 15 9"><path d="M1.5 7.5L7.5 1.5L13.5 7.5" fill="none" stroke="#fff" stroke-width="1.3"></path></svg>
<svg style="position:absolute;left:1644px;top:1050px;" width="15" height="19" viewBox="0 0 15 19"><path d="M4 3H2V16H4M11 3H13V16H11" fill="none" stroke="#fff" stroke-width="1.1"></path><rect x="4" y="7" width="6" height="5.5" fill="none" stroke="#fff" stroke-width="1.1"></rect><path d="M10 9L13 7.5V12L10 10.5" fill="#fff"></path></svg>
<svg style="position:absolute;left:1665px;top:1053px;" width="20" height="12" viewBox="0 0 20 12"><path d="M4 11C2 11 1 9.8 1 8.3C1 6.8 2.2 5.7 3.8 5.8C4.5 3.3 6.6 1.5 9.2 1.5C11.8 1.5 13.8 3.2 14.4 5.5C17 5.2 19 6.8 19 8.6C19 10 18 11 16.5 11Z" fill="#e6e6e6"></path></svg>
<svg style="position:absolute;left:1692px;top:1050px;" width="16" height="18" viewBox="0 0 16 18"><path d="M1.5 15C1.5 8.5 6.5 3 13 3M4.5 15C4.5 10.3 8.3 6.3 13 6.3M7.5 15C7.5 12 10 9.6 13 9.6" fill="none" stroke="#fff" stroke-width="1.1"></path><circle cx="12.5" cy="14.5" r="1.6" fill="#fff"></circle></svg>
<svg style="position:absolute;left:1713px;top:1050px;" width="22" height="18" viewBox="0 0 22 18"><path d="M2 6.5H5.5L10 2.5V15.5L5.5 11.5H2Z" fill="none" stroke="#fff" stroke-width="1.1"></path><path d="M13 6C14 7 14 11 13 12M15.5 4C17.5 6.5 17.5 11.5 15.5 14M18.5 2.5C21 6 21 12 18.5 15.5" fill="none" stroke="#fff" stroke-width="1.1"></path></svg>
<svg style="position:absolute;left:1741px;top:1049px;" width="20" height="20" viewBox="0 0 20 20"><path d="M3 17C2 15 4 13 6 13.5M6 13.5L15.5 3.5C16.5 2.5 18 3.8 17 4.8L8 14.5Z M13 9.5C15 9.5 16.5 10.5 16 12" fill="none" stroke="#fff" stroke-width="1.1"></path></svg>
<span class="t" id="t72" style="left: 1772.38px; top: 1053.75px; font-size: 12.21px; line-height: 12.21px; font-weight: 400; color: rgb(255, 255, 255); transform: scaleX(0.8717);">ENG</span>
<span class="t" id="t73" style="left: 1811.75px; top: 1045.01px; font-size: 12.79px; line-height: 12.79px; font-weight: 400; color: rgb(255, 255, 255); transform: scaleX(0.8694);">12:08 PM</span>
<span class="t" id="t74" style="left: 1811.75px; top: 1062.51px; font-size: 12.79px; line-height: 12.79px; font-weight: 400; color: rgb(255, 255, 255); transform: scaleX(0.9216);">4/5/2022</span>
<svg style="position:absolute;left:1878px;top:1050px;" width="34" height="30" viewBox="0 0 34 30"><path d="M2 2H18.5V13H9L5.5 16V13H2Z" fill="#fff"></path><path d="M5 5.5H15.5M5 8H15.5M5 10.5H12" stroke="#2b3b40" stroke-width="1.1"></path><circle cx="16" cy="17" r="9" fill="#2b3a3e" stroke="#aab4b6" stroke-width="1"></circle></svg>
<span class="t" id="t75" style="left: 1887.5px; top: 1060px; font-size: 14.54px; line-height: 14.54px; font-weight: 700; color: rgb(255, 255, 255); transform: scaleX(0.8395);">21</span>
<div style="position:absolute;left:1915px;top:1040px;width:1px;height:40px;background:#5b6a6e"></div>
</body></html>
